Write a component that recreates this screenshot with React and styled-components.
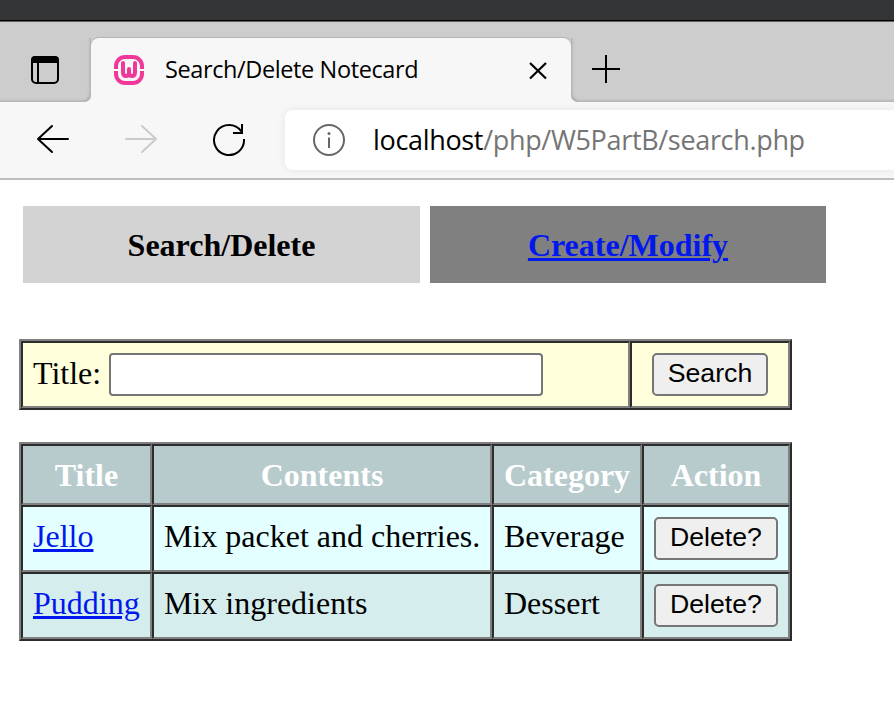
import React from "react";
import styled, { createGlobalStyle } from "styled-components";

const Global = createGlobalStyle`
  *, *::before, *::after { box-sizing: border-box; }
  body { margin: 0; background: #fff; overflow: hidden; }
`;

const SERIF = '"Liberation Serif", "Times New Roman", serif';
const UI = '"Open Sans", "Noto Sans", sans-serif';

const Window = styled.div`
  width: 894px;
  height: 718px;
  overflow: hidden;
  background: #fff;
  color: #000;
  font-family: ${SERIF};
`;

const TitleBar = styled.div`
  height: 22px;
  background: #343537;
  border-bottom: 1px solid #606060;
  box-shadow: inset 0 -1px #000;
`;

const TabStrip = styled.div`
  display: flex;
  height: 80px;
  padding-top: 16px;
  background: linear-gradient(#cdcdcd 50px, #f7f7f7 50px);
`;

const StripLeft = styled.div`
  display: flex;
  align-items: center;
  width: 91px;
  padding-left: 30px;
  background: #cdcdcd;
  border-bottom-right-radius: 7px;
  box-shadow: inset -2px -2px 3px -1px #aaa;
`;

const StripRight = styled.div`
  flex: 1;
  padding: 17px 0 0 20px;
  background: #cdcdcd;
  border-bottom-left-radius: 7px;
  box-shadow: inset 2px -2px 3px -1px #aaa;
`;

const Tab = styled.div`
  display: flex;
  align-items: center;
  width: 480px;
  padding: 0 23px;
  background: #f7f7f7;
  border-radius: 8px 8px 0 0;
  box-shadow: 0 -1px 1px #b4b4b4;
`;

const TabTitle = styled.span`
  flex: 1;
  margin-left: 21px;
  padding-bottom: 2px;
  font: 23.5px/30px ${UI};
  letter-spacing: -0.39px;
  white-space: nowrap;
`;

const Toolbar = styled.div`
  display: flex;
  align-items: center;
  height: 78px;
  padding-left: 35px;
  background: #f7f7f7;
  border-bottom: 2px solid #bdbdbd;
`;

const NavIcons = styled.div`
  display: flex;
  gap: 52px;
  width: 250px;
`;

const AddressBar = styled.div`
  display: flex;
  align-items: center;
  flex: 1;
  height: 60px;
  padding-left: 27px;
  background: #fff;
  border-radius: 8px 0 0 8px;
  box-shadow: 0 0 9px #e4e4e4;
`;

const Address = styled.span`
  margin-left: 27px;
  font: 27px/36px ${UI};
  letter-spacing: -0.33px;
  color: #757575;
  white-space: nowrap;
  b { color: #000; font-weight: 400; }
`;

const Page = styled.main`
  padding: 26px 0 0 19px;
  font-size: 32px;
  line-height: 37px;
`;

const Nav = styled.nav`
  display: flex;
  gap: 10px;
  margin: 0 0 56px 4px;
`;

const NavItem = styled.div`
  display: flex;
  align-items: center;
  justify-content: center;
  width: ${(p) => (p.$active ? 397 : 396)}px;
  height: 77px;
  padding-top: 2px;
  background: ${(p) => (p.$active ? "#d3d3d3" : "#808080")};
  font-weight: 700;
`;

const Link = styled.a`
  color: #0018ee;
  text-decoration: underline;
  text-decoration-thickness: 3px;
  text-underline-offset: 2px;
`;

const Table = styled.table`
  width: 773px;
  margin-bottom: 32px;
  table-layout: fixed;
  border-collapse: separate;
  border-spacing: 0;
  border: 2px solid;
  border-color: #808080 #2c2c2c #2c2c2c #808080;
`;

const Row = styled.tr`
  height: ${(p) => p.$height}px;
  background: ${(p) => p.$bg};
`;

const Cell = styled.td`
  padding: 0 0 ${(p) => p.$lift ?? 4}px 10px;
  border: 2px solid;
  border-color: #2c2c2c #808080 #808080 #2c2c2c;
  white-space: nowrap;
  vertical-align: middle;
`;

const HeadCell = styled(Cell).attrs({ as: "th" })`
  padding: 1px 0 0;
  color: #fff;
  text-align: center;
`;

const Field = styled.label`
  display: flex;
  align-items: center;
  gap: 8px;
`;

const FieldName = styled.span`
  padding-bottom: 2px;
`;

const Input = styled.input`
  width: 434px;
  height: 43px;
  border: 2px solid #767676;
  border-radius: 4px;
  background: #fff;
  font: 27px "Liberation Sans", Arial, sans-serif;
`;

const Button = styled.button`
  display: block;
  width: ${(p) => p.$width}px;
  height: 43px;
  margin-left: ${(p) => p.$indent ?? 0}px;
  padding: 0 0 2px;
  border: 2px solid #767676;
  border-radius: 5px;
  background: #efefef;
  color: #000;
  font: 26.67px/35px "Liberation Sans", Arial, sans-serif;
`;

const cards = [
  { title: "Jello", contents: "Mix packet and cherries.", category: "Beverage", bg: "#e4ffff" },
  { title: "Pudding", contents: "Mix ingredients", category: "Dessert", bg: "#d5eded" },
];

const PanelIcon = () => (
  <svg width="30" height="30" viewBox="0 0 30 30" fill="none" stroke="#000" strokeWidth="2">
    <rect x="2" y="2" width="26" height="26" rx="4" />
    <path d="M1 8V5a4 4 0 0 1 4-4h20a4 4 0 0 1 4 4v3z" fill="#000" stroke="none" />
    <path d="M8 8v20" />
  </svg>
);

const Favicon = () => (
  <svg width="30" height="30" viewBox="0 0 30 30" fill="none" stroke="#f0389b">
    <path d="M2 14V11a9 9 0 0 1 9-9h8a9 9 0 0 1 9 9v3M2 16v3a9 9 0 0 0 9 9h8a9 9 0 0 0 9-9v-3" strokeWidth="4" />
    <path d="M9 8v9q0 4 3 4t3-3v-4v4q0 3 3 3t3-4V8" strokeWidth="4" strokeLinecap="round" strokeLinejoin="round" />
  </svg>
);

const CloseIcon = () => (
  <svg width="20" height="20" viewBox="0 0 20 20" stroke="#000" strokeWidth="2.2">
    <path d="M2 3l16 15.500M18 3L2 18.500" />
  </svg>
);

const PlusIcon = () => (
  <svg width="30" height="30" viewBox="0 0 30 30" stroke="#000" strokeWidth="2">
    <path d="M15 0v28M1 14h28" />
  </svg>
);

const ArrowIcon = ({ color, flip }) => (
  <svg width="36" height="34" viewBox="0 0 36 34" fill="none" stroke={color} strokeWidth="2" strokeLinecap="round" strokeLinejoin="round">
    <path d={flip ? "M3 16h30M19 3l14 13-14 13" : "M33 16H3M17 3L3 16l14 13"} />
  </svg>
);

const ReloadIcon = () => (
  <svg width="36" height="34" viewBox="0 0 36 34" fill="none" stroke="#000" strokeWidth="2">
    <path d="M33 16A15 15 0 1 1 30.300 8.400M31 1v9h-9" />
  </svg>
);

const InfoIcon = () => (
  <svg width="34" height="34" viewBox="0 0 34 34" fill="none" stroke="#666" strokeWidth="2">
    <circle cx="17" cy="17" r="15" />
    <path d="M17 14.500V25" />
    <circle cx="17" cy="10.500" r="1.500" fill="#666" stroke="none" />
  </svg>
);

export default function App() {
  return (
    <Window>
      <Global />
      <TitleBar />
      <TabStrip>
        <StripLeft><PanelIcon /></StripLeft>
        <Tab>
          <Favicon />
          <TabTitle>Search/Delete Notecard</TabTitle>
          <CloseIcon />
        </Tab>
        <StripRight><PlusIcon /></StripRight>
      </TabStrip>
      <Toolbar>
        <NavIcons>
          <ArrowIcon color="#000" />
          <ArrowIcon color="#cbcbcb" flip />
          <ReloadIcon />
        </NavIcons>
        <AddressBar>
          <InfoIcon />
          <Address><b>localhost</b>/php/W5PartB/search.php</Address>
        </AddressBar>
      </Toolbar>
      <Page>
        <Nav>
          <NavItem $active>Search/Delete</NavItem>
          <NavItem><Link>Create/Modify</Link></NavItem>
        </Nav>
        <Table>
          <colgroup><col width="609" /><col width="160" /></colgroup>
          <tbody>
            <Row $height={67} $bg="#ffffdb">
              <Cell $lift={0}><Field><FieldName>Title:</FieldName><Input /></Field></Cell>
              <Cell $lift={0}><Button $width={116} $indent={10}>Search</Button></Cell>
            </Row>
          </tbody>
        </Table>
        <Table>
          <colgroup><col width="131" /><col width="340" /><col width="150" /><col width="148" /></colgroup>
          <thead>
            <Row $height={61} $bg="#b7cbcd">
              {["Title", "Contents", "Category", "Action"].map((h) => <HeadCell key={h}>{h}</HeadCell>)}
            </Row>
          </thead>
          <tbody>
            {cards.map((c) => (
              <Row key={c.title} $height={67} $bg={c.bg}>
                <Cell><Link>{c.title}</Link></Cell>
                <Cell>{c.contents}</Cell>
                <Cell>{c.category}</Cell>
                <Cell $lift={0}><Button $width={124}>Delete?</Button></Cell>
              </Row>
            ))}
          </tbody>
        </Table>
      </Page>
    </Window>
  );
}
